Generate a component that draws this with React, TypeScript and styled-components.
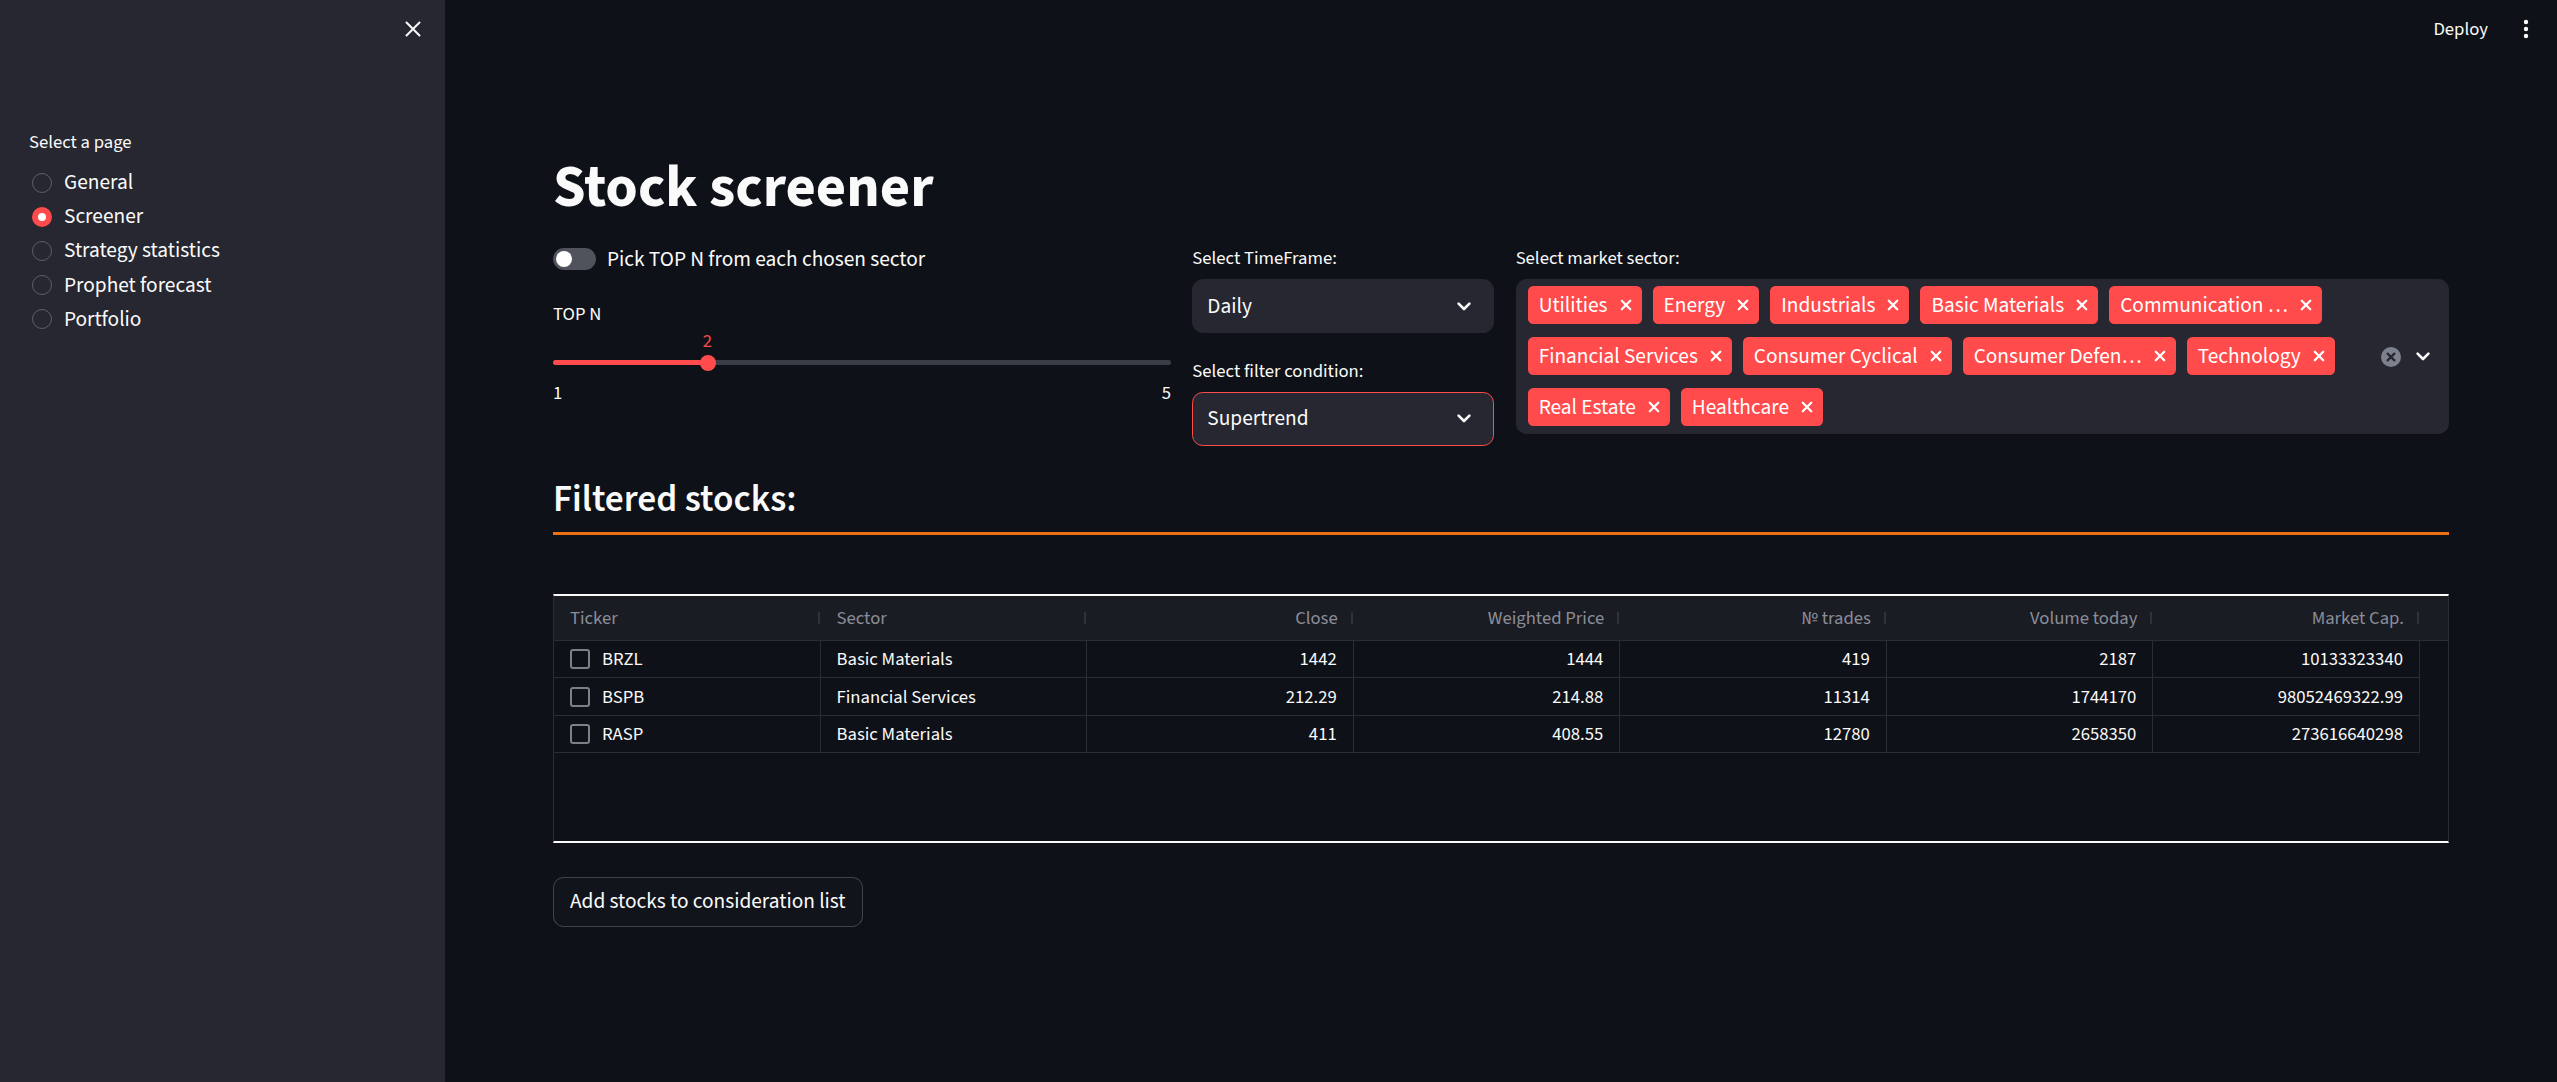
import React from "react";
import styled, { createGlobalStyle } from "styled-components";

const FONT = `"Source Sans 3", "Lato", sans-serif`;

const GlobalStyle = createGlobalStyle`
  * { box-sizing: border-box; }
  html, body { margin: 0; padding: 0; background: #0e1117; }
  body { font-family: ${FONT}; color: #fafafa; -webkit-font-smoothing: antialiased; }
  button { font-family: ${FONT}; }
`;

/* ---------- shell ---------- */
const Shell = styled.div`
  display: flex;
  width: 100vw;
  height: 100vh;
  overflow: hidden;
  background: #0e1117;
`;

/* ---------- sidebar ---------- */
const Sidebar = styled.aside`
  width: 445px;
  flex-shrink: 0;
  background: #262730;
  display: flex;
  flex-direction: column;
`;

const SidebarTop = styled.div`
  height: 58px;
  display: flex;
  align-items: center;
  justify-content: flex-end;
  padding-right: 24px;
`;

const IconButton = styled.button`
  display: flex;
  align-items: center;
  justify-content: center;
  background: none;
  border: none;
  padding: 0;
  color: #fafafa;
  cursor: pointer;
`;

const Nav = styled.nav`
  display: flex;
  flex-direction: column;
  padding: 69px 0 0 29px;
`;

const NavLabel = styled.div`
  font-size: 18.67px;
  line-height: 30px;
  height: 30px;
  margin-bottom: 8.5px;
  color: #fafafa;
`;

const RadioList = styled.div`
  display: flex;
  flex-direction: column;
  padding-left: 3px;
`;

const RadioItem = styled.label`
  display: flex;
  align-items: center;
  gap: 12px;
  height: 34.2px;
  font-size: 21.33px;
  color: #fafafa;
  cursor: pointer;
`;

const RadioDot = styled.span<{ $checked?: boolean }>`
  width: 20px;
  height: 20px;
  border-radius: 50%;
  flex-shrink: 0;
  display: flex;
  align-items: center;
  justify-content: center;
  background: ${(p) => (p.$checked ? "#ff4b4b" : "transparent")};
  border: ${(p) => (p.$checked ? "none" : "1.5px solid #5d5f68")};
  &::after {
    content: "";
    display: ${(p) => (p.$checked ? "block" : "none")};
    width: 8px;
    height: 8px;
    border-radius: 50%;
    background: #ffffff;
  }
`;

/* ---------- main ---------- */
const Main = styled.main`
  flex: 1;
  min-width: 0;
  display: flex;
  flex-direction: column;
`;

const TopBar = styled.header`
  height: 58px;
  display: flex;
  align-items: center;
  justify-content: flex-end;
  gap: 35px;
  padding-right: 28px;
`;

const DeployButton = styled.button`
  background: none;
  border: none;
  padding: 0;
  color: #fafafa;
  font-size: 18.67px;
  line-height: 30px;
  cursor: pointer;
`;

const Content = styled.div`
  display: flex;
  flex-direction: column;
  padding: 0 108px;
`;

const Title = styled.h1`
  margin: 94.5px 0 0;
  font-size: 58.67px;
  font-weight: 700;
  line-height: 70.4px;
  height: 70.4px;
  color: #fafafa;
`;

const Controls = styled.div`
  margin-top: 19px;
  display: grid;
  grid-template-columns: 618px 302px 1fr;
  column-gap: 21.33px;
  align-items: start;
`;

const Column = styled.div`
  display: flex;
  flex-direction: column;
  min-width: 0;
`;

const FieldStack = styled.div`
  display: flex;
  flex-direction: column;
  gap: 21.33px;
`;

const Field = styled.div`
  display: flex;
  flex-direction: column;
`;

const FieldLabel = styled.div`
  height: 32px;
  line-height: 32px;
  font-size: 18.67px;
  margin-bottom: 5.33px;
  color: #fafafa;
`;

/* toggle */
const ToggleRow = styled.label`
  height: 35px;
  display: flex;
  align-items: center;
  gap: 11px;
  font-size: 21.33px;
  color: #fafafa;
`;

const ToggleTrack = styled.span`
  width: 43px;
  height: 22px;
  border-radius: 11px;
  background: #50525c;
  display: flex;
  align-items: center;
  padding: 0 3px;
  flex-shrink: 0;
`;

const ToggleKnob = styled.span`
  width: 16px;
  height: 16px;
  border-radius: 50%;
  background: #ffffff;
`;

/* slider */
const SliderLabel = styled.div`
  margin-top: 22px;
  font-size: 18.67px;
  line-height: 30px;
  height: 30px;
  color: #fafafa;
`;

const SliderTrack = styled.div<{ $pct: number }>`
  margin-top: 26px;
  height: 16px;
  position: relative;
  display: flex;
  align-items: center;
  &::before {
    content: "";
    display: block;
    width: 100%;
    height: 5px;
    border-radius: 3px;
    background: linear-gradient(
      to right,
      #ff4b4b ${(p) => p.$pct}%,
      #3a3c46 ${(p) => p.$pct}%
    );
  }
`;

const SliderThumb = styled.span`
  position: absolute;
  top: 0;
  width: 16px;
  height: 16px;
  border-radius: 50%;
  background: #ff4b4b;
  transform: translateX(-50%);
`;

const SliderValue = styled.span`
  position: absolute;
  top: -29px;
  font-size: 18.67px;
  line-height: 30px;
  color: #ff4b4b;
  transform: translateX(-50%);
`;

const TickRow = styled.div`
  margin-top: 7px;
  display: flex;
  justify-content: space-between;
  font-size: 18.67px;
  line-height: 30px;
  color: #fafafa;
`;

/* select */
const SelectBox = styled.div<{ $focused?: boolean }>`
  height: 54px;
  background: #262730;
  border: 1px solid ${(p) => (p.$focused ? "#ff4b4b" : "#262730")};
  border-radius: 10.67px;
  display: flex;
  align-items: center;
  justify-content: space-between;
  padding: 0 22px 0 14px;
  font-size: 21.33px;
  color: #fafafa;
`;

/* multiselect */
const MultiBox = styled.div`
  background: #262730;
  border-radius: 10.67px;
  display: flex;
  align-items: center;
`;

const TagArea = styled.div`
  flex: 1;
  min-width: 0;
  display: flex;
  flex-wrap: wrap;
  gap: 13px 11px;
  padding: 7px 0 8px 12px;
`;

const Tag = styled.span`
  height: 38px;
  display: inline-flex;
  align-items: center;
  gap: 12px;
  padding: 0 10px 0 11px;
  background: #ff4b4b;
  border-radius: 5.33px;
  color: #ffffff;
  font-size: 21.33px;
  white-space: nowrap;
`;

const TagText = styled.span`
  white-space: nowrap;
`;

const MultiIcons = styled.div`
  display: flex;
  align-items: center;
  gap: 15px;
  padding: 0 19px 0 12px;
`;

/* section heading */
const SectionTitle = styled.h2`
  margin: 32px 0 0;
  font-size: 37.33px;
  font-weight: 600;
  line-height: 44.8px;
  height: 44.8px;
  color: #fafafa;
`;

const Divider = styled.hr`
  margin: 9.2px 0 0;
  border: none;
  height: 2.67px;
  background: #ed7014;
`;

/* table */
const TableFrame = styled.div`
  margin-top: 59.3px;
  height: 249px;
  border-top: 2px solid #fafafa;
  border-bottom: 2px solid #fafafa;
  border-left: 1px solid #2b2d36;
  border-right: 1px solid #2b2d36;
  display: flex;
  flex-direction: column;
  background: #0e1117;
`;

const HeaderRow = styled.div`
  height: 45px;
  flex-shrink: 0;
  background: #1a1c24;
  border-bottom: 1px solid #2b2d36;
  display: grid;
  grid-template-columns: repeat(7, 266.57px) 1fr;
`;

const HeaderCell = styled.div<{ $num?: boolean }>`
  display: flex;
  align-items: center;
  justify-content: ${(p) => (p.$num ? "flex-end" : "flex-start")};
  padding: 0 1px 0 16px;
  font-size: 18.67px;
  color: #8b8d97;
  white-space: nowrap;
`;

const HeaderSep = styled.span<{ $num?: boolean }>`
  width: 2px;
  height: 12px;
  background: #30323b;
  margin-left: ${(p) => (p.$num ? "13px" : "auto")};
  flex-shrink: 0;
`;

const BodyRow = styled.div`
  height: 37.5px;
  flex-shrink: 0;
  display: grid;
  grid-template-columns: repeat(7, 266.57px);
  width: fit-content;
  border-bottom: 1px solid #2b2d36;
`;

const Cell = styled.div<{ $num?: boolean }>`
  display: flex;
  align-items: center;
  gap: 12px;
  justify-content: ${(p) => (p.$num ? "flex-end" : "flex-start")};
  padding: ${(p) => (p.$num ? "0 16px 0 0" : "0 0 0 16px")};
  border-right: 1px solid #2b2d36;
  font-size: 18.67px;
  color: #fafafa;
  white-space: nowrap;
`;

const CheckBox = styled.span`
  width: 20px;
  height: 20px;
  border: 2px solid #7e8089;
  border-radius: 3px;
  flex-shrink: 0;
`;

const ActionButton = styled.button`
  margin-top: 34px;
  align-self: flex-start;
  height: 50px;
  padding: 0 16px;
  background: #11141b;
  border: 1px solid rgba(250, 250, 250, 0.2);
  border-radius: 10.67px;
  color: #fafafa;
  font-size: 21.33px;
  cursor: pointer;
`;

/* ---------- icons ---------- */
const CloseIcon = () => (
  <svg width="16" height="16" viewBox="0 0 16 16">
    <path d="M1.5 1.5 L14.5 14.5 M14.5 1.5 L1.5 14.5" stroke="#fafafa" strokeWidth="2" strokeLinecap="round" />
  </svg>
);

const KebabIcon = () => (
  <svg width="6" height="20" viewBox="0 0 6 20">
    <circle cx="3" cy="3" r="2.2" fill="#fafafa" />
    <circle cx="3" cy="10" r="2.2" fill="#fafafa" />
    <circle cx="3" cy="17" r="2.2" fill="#fafafa" />
  </svg>
);

const Chevron = () => (
  <svg width="14" height="9" viewBox="0 0 14 9">
    <path d="M1.6 1.6 L7 7 L12.4 1.6" stroke="#fafafa" strokeWidth="2.6" fill="none" strokeLinecap="round" strokeLinejoin="round" />
  </svg>
);

const TagX = () => (
  <svg width="12" height="12" viewBox="0 0 12 12" style={{ flexShrink: 0 }}>
    <path d="M1.8 1.8 L10.2 10.2 M10.2 1.8 L1.8 10.2" stroke="#ffffff" strokeWidth="2.3" strokeLinecap="round" />
  </svg>
);

const ClearAll = () => (
  <svg width="20" height="20" viewBox="0 0 20 20">
    <circle cx="10" cy="10" r="10" fill="#7d808d" />
    <path d="M6.6 6.6 L13.4 13.4 M13.4 6.6 L6.6 13.4" stroke="#262730" strokeWidth="2.2" strokeLinecap="round" />
  </svg>
);

/* ---------- data ---------- */
const pages = ["General", "Screener", "Strategy statistics", "Prophet forecast", "Portfolio"];

const sectors = [
  "Utilities",
  "Energy",
  "Industrials",
  "Basic Materials",
  "Communication …",
  "Financial Services",
  "Consumer Cyclical",
  "Consumer Defen…",
  "Technology",
  "Real Estate",
  "Healthcare",
];

const columns: { name: string; num: boolean }[] = [
  { name: "Ticker", num: false },
  { name: "Sector", num: false },
  { name: "Close", num: true },
  { name: "Weighted Price", num: true },
  { name: "№ trades", num: true },
  { name: "Volume today", num: true },
  { name: "Market Cap.", num: true },
];

const rows = [
  ["BRZL", "Basic Materials", "1442", "1444", "419", "2187", "10133323340"],
  ["BSPB", "Financial Services", "212.29", "214.88", "11314", "1744170", "98052469322.99"],
  ["RASP", "Basic Materials", "411", "408.55", "12780", "2658350", "273616640298"],
];

export default function App() {
  const sliderPct = 25;
  return (
    <>
      <GlobalStyle />
      <Shell>
        <Sidebar>
          <SidebarTop>
            <IconButton aria-label="Close sidebar">
              <CloseIcon />
            </IconButton>
          </SidebarTop>
          <Nav>
            <NavLabel>Select a page</NavLabel>
            <RadioList>
              {pages.map((p) => (
                <RadioItem key={p}>
                  <RadioDot $checked={p === "Screener"} />
                  {p}
                </RadioItem>
              ))}
            </RadioList>
          </Nav>
        </Sidebar>

        <Main>
          <TopBar>
            <DeployButton>Deploy</DeployButton>
            <IconButton aria-label="Main menu">
              <KebabIcon />
            </IconButton>
          </TopBar>

          <Content>
            <Title>Stock screener</Title>

            <Controls>
              <Column>
                <ToggleRow>
                  <ToggleTrack>
                    <ToggleKnob />
                  </ToggleTrack>
                  Pick TOP N from each chosen sector
                </ToggleRow>
                <SliderLabel>TOP N</SliderLabel>
                <SliderTrack $pct={sliderPct}>
                  <SliderValue style={{ left: `${sliderPct}%` }}>2</SliderValue>
                  <SliderThumb style={{ left: `${sliderPct}%` }} />
                </SliderTrack>
                <TickRow>
                  <span>1</span>
                  <span>5</span>
                </TickRow>
              </Column>

              <Column>
                <FieldStack>
                  <Field>
                    <FieldLabel>Select TimeFrame:</FieldLabel>
                    <SelectBox>
                      <span>Daily</span>
                      <Chevron />
                    </SelectBox>
                  </Field>
                  <Field>
                    <FieldLabel>Select filter condition:</FieldLabel>
                    <SelectBox $focused>
                      <span>Supertrend</span>
                      <Chevron />
                    </SelectBox>
                  </Field>
                </FieldStack>
              </Column>

              <Column>
                <Field>
                  <FieldLabel>Select market sector:</FieldLabel>
                  <MultiBox>
                    <TagArea>
                      {sectors.map((s) => (
                        <Tag key={s}>
                          <TagText>{s}</TagText>
                          <TagX />
                        </Tag>
                      ))}
                    </TagArea>
                    <MultiIcons>
                      <ClearAll />
                      <Chevron />
                    </MultiIcons>
                  </MultiBox>
                </Field>
              </Column>
            </Controls>

            <SectionTitle>Filtered stocks:</SectionTitle>
            <Divider />

            <TableFrame>
              <HeaderRow>
                {columns.map((c) => (
                  <HeaderCell key={c.name} $num={c.num}>
                    {c.name}
                    <HeaderSep $num={c.num} />
                  </HeaderCell>
                ))}
              </HeaderRow>
              {rows.map((r) => (
                <BodyRow key={r[0]}>
                  {r.map((v, i) => (
                    <Cell key={i} $num={columns[i].num}>
                      {i === 0 && <CheckBox />}
                      {v}
                    </Cell>
                  ))}
                </BodyRow>
              ))}
            </TableFrame>

            <ActionButton>Add stocks to consideration list</ActionButton>
          </Content>
        </Main>
      </Shell>
    </>
  );
}
